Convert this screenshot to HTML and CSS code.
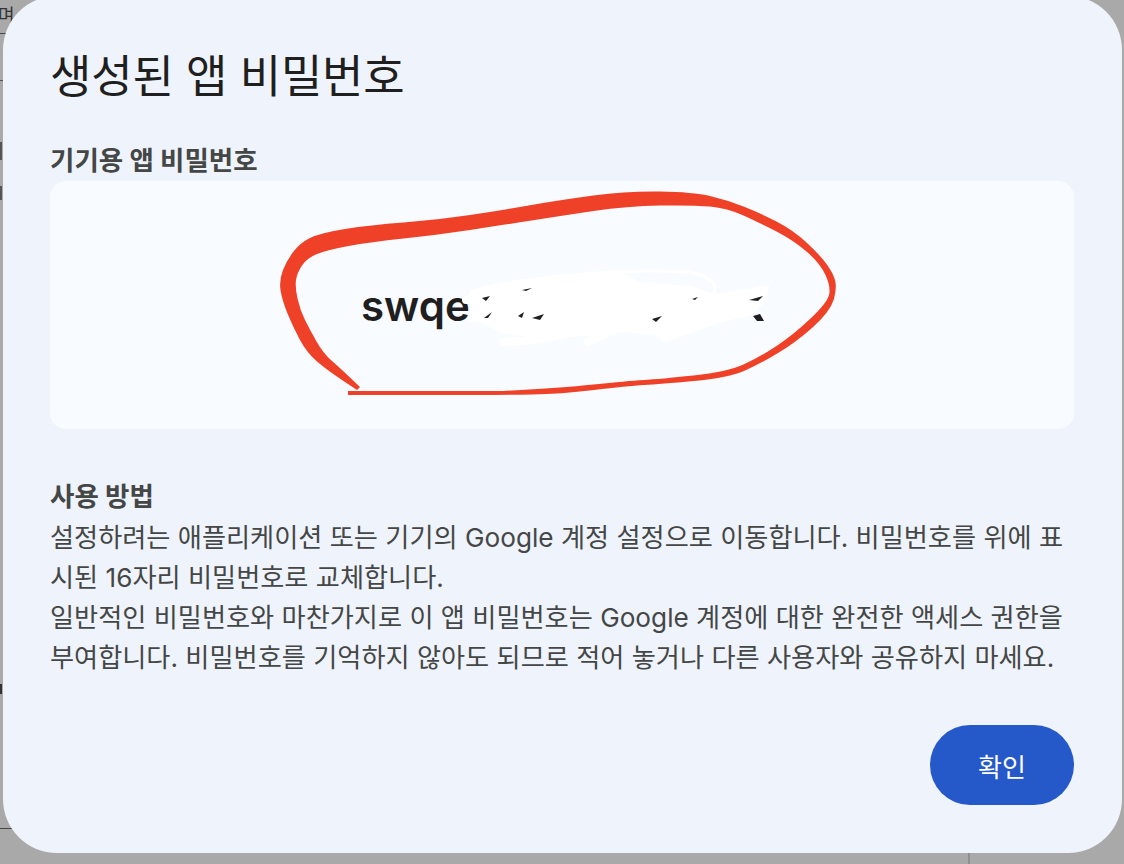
FILE: index.html
```html
<!DOCTYPE html>
<html lang="ko">
<head>
<meta charset="utf-8">
<title>생성된 앱 비밀번호</title>
<link rel="stylesheet" href="styles.css">
</head>
<body>
<div class="backdrop-bits">
  <span class="bit bit-a">며</span>
  <span class="rule rule-a"></span>
  <span class="rule rule-b"></span>
  <span class="rule rule-c"></span>
  <span class="rule rule-d"></span>
  <span class="rule rule-e"></span>
  <span class="rule rule-f"></span>
  <span class="rule rule-g"></span>
</div>
<main class="dialog">
  <h1 class="title">생성된 앱 비밀번호</h1>
  <h2 class="label">기기용 앱 비밀번호</h2>
  <div class="password-box"><span class="password">swqe</span></div>
  <section class="howto">
    <h3 class="howto-title">사용 방법</h3>
    <p class="howto-text">설정하려는 애플리케이션 또는 기기의 Google 계정 설정으로 이동합니다. 비밀번호를 위에 표시된 16자리 비밀번호로 교체합니다.</p>
    <p class="howto-text">일반적인 비밀번호와 마찬가지로 이 앱 비밀번호는 Google 계정에 대한 완전한 액세스 권한을 부여합니다. 비밀번호를 기억하지 않아도 되므로 적어 놓거나 다른 사용자와 공유하지 마세요.</p>
  </section>
  <div class="actions"><button class="ok">확인</button></div>
</main>
<svg class="markup" width="1124" height="864" viewBox="0 0 1124 864" aria-hidden="true">
  <path class="scribble-fill" d="M470 290 L503 282 L563 274 L620 272 L640 282 L690 286 L716 294 L770 285 L765 302 L750 316 L700 326 L660 336 L625 332 L588 336 L540 338 L503 334 L480 322 L470 318 Z"/>
  <g class="scribble-lines">
    <path d="M466 300 L560 282 M472 318 L610 290 M504 342 Q560 340 600 322 M588 342 L640 318 M664 338 L740 312"/>
  </g>
  <path class="scribble-thin" d="M525 282 Q600 268 690 272 Q716 278 715 290 Q712 300 680 306"/>
  <g class="specks">
    <path d="M482 298 L490 296 L486 301 Z"/>
    <path d="M484 318 L492 312 L488 318 Z"/>
    <path d="M518 316 L524 312 L522 318 Z"/>
    <path d="M532 318 L544 314 L540 320 Z"/>
    <path d="M522 290 L532 288 L526 291 Z"/>
    <path d="M652 319 L662 316 L656 322 Z"/>
    <path d="M692 299 L698 297 L695 300 Z"/>
    <path d="M749 300 L763 296 L758 301 Z"/>
    <path d="M753 316 L760 314 L764 321 L757 321 Z"/>
  </g>
  <path class="ink" d="M348 391 L503 391 Q560 388 593.5 384.5 Q627 381 643.5 380 Q660 379 693.5 375.5 Q727 372 743.5 364.5 Q760 357 776.5 346 Q793 335 810 319 Q827 303 829 295 Q831 287 825.5 275 Q820 263 806.5 251.5 Q793 240 776.5 231.5 Q760 223 743.5 215.5 Q727 208 710 206.5 Q693 205 660 205.5 Q627 206 593.5 211 Q560 216 531.5 220.5 Q503 225 470 230 Q437 235 403.5 238.5 Q370 242 348.5 246 Q327 250 317 254 Q307 258 302 265.5 Q297 273 296 280 Q295 287 297.5 298.5 Q300 310 305 320 Q310 330 316.5 341.5 Q323 353 331.5 360.5 Q340 368 350 377.5 L360 387 L357 390 L342 380 Q327 370 317 361.5 Q307 353 300 340 Q293 327 287.5 313.5 Q282 300 280.5 290 Q279 280 283 270 Q287 260 293.5 251.5 Q300 243 310 238 Q320 233 345 229 Q370 225 403.5 222.5 Q437 220 470 215 Q503 210 531.5 205 Q560 200 593.5 195.5 Q627 191 660 191.5 Q693 192 710 196 Q727 200 743.5 206.5 Q760 213 776.5 221.5 Q793 230 806.5 242.5 Q820 255 826.5 264 Q833 273 835 280 Q837 287 834 299 Q830 312 812 328 Q795 343 778 353 Q760 364 744 371 Q727 378 694 381 Q660 384 644 385 Q627 386 594 390 Q560 394 532 394.5 Q503 395 480 395 L348 395 Z"/>
</svg>
</body>
</html>
```
FILE: styles.css
```css
* { box-sizing: border-box; }
html, body { margin: 0; height: 100%; }
body {
  width: 1124px;
  height: 864px;
  overflow: hidden;
  background: #a9a9a9;
  font-family: "Inter", "Noto Sans CJK KR", sans-serif;
  position: relative;
}
.backdrop-bits { position: absolute; inset: 0; }
.bit { position: absolute; left: -2px; top: 6px; font-size: 18px; color: #333; line-height: 20px; }
.rule { position: absolute; background: #777; }
.rule-a { left: 0; top: 33px; width: 14px; height: 1px; background: #444; }
.rule-b { left: 0; top: 80px; width: 4px; height: 1px; background: #555; }
.rule-c { left: 0; top: 828px; width: 12px; height: 1px; background: #444; }
.rule-d { left: 968px; top: 853px; width: 2px; height: 11px; background: #909090; }
.rule-e { left: 0; top: 684px; width: 2px; height: 10px; background: #333; }
.rule-f { left: 0; top: 142px; width: 2px; height: 18px; background: #555; }
.rule-g { left: 0; top: 186px; width: 2px; height: 14px; background: #555; }

.dialog {
  position: absolute;
  left: 3px;
  top: -4px;
  width: 1119px;
  height: 857px;
  border-radius: 54px;
  background: #eff3fb;
  padding: 53px 48px 0 47px;
  display: flex;
  flex-direction: column;
}
.title {
  margin: 0;
  font-size: 45px;
  line-height: 56px;
  font-weight: 400;
  letter-spacing: -0.2px;
  color: #1f1f1f;
}
.label {
  margin: 39px 0 0;
  font-size: 26.5px;
  line-height: 32px;
  font-weight: 700;
  color: #444746;
}
.password-box {
  margin-top: 5px;
  height: 248px;
  border-radius: 16px;
  background: #f8fbff;
  display: flex;
  align-items: center;
  padding: 0 0 0 311px;
}
.password {
  font-size: 42px;
  font-weight: 600;
  color: #1f1f1f;
}
.howto { margin-top: 47px; }
.howto-title {
  margin: 0 0 2px;
  font-size: 26.5px;
  line-height: 40px;
  font-weight: 700;
  color: #444746;
}
.howto-text {
  margin: 0;
  font-size: 26.2px;
  line-height: 40px;
  font-weight: 400;
  color: #444746;
}
.actions { margin-top: 47px; display: flex; justify-content: flex-end; }
.ok {
  width: 144px;
  height: 80px;
  border: 0;
  border-radius: 40px;
  background: #2558c9;
  color: #fff;
  font: 400 26px "Inter", "Noto Sans CJK KR", sans-serif;
}
.markup { position: absolute; left: 0; top: 0; }
.ink { fill: #ee4127; }
.scribble-fill { fill: #ffffff; }
.scribble-lines { fill: none; stroke: #ffffff; stroke-width: 8; stroke-linecap: round; }
.scribble-thin { fill: none; stroke: #ffffff; stroke-width: 3; stroke-linecap: round; }
.specks { fill: #1f1f1f; }
```
